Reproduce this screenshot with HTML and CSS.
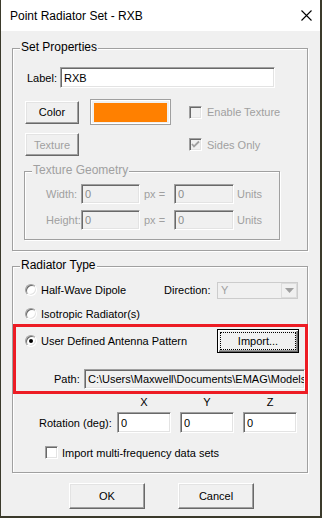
FILE: index.html
```html
<!DOCTYPE html>
<html lang="en">
<head>
    <meta charset="UTF-8">
    <title>Point Radiator Set - RXB</title>
    <link rel="stylesheet" href="styles.css">
</head>
<body>
    <div class="window">
        <div class="titlebar">
            <span class="title">Point Radiator Set - RXB</span>
            <svg class="close" width="11" height="11" viewBox="0 0 11 11">
                <path d="M0.5 0.5 L10.5 10.5 M10.5 0.5 L0.5 10.5" stroke="#000" stroke-width="1.1" fill="none"/>
            </svg>
        </div>
        <div class="client">
            <!-- Set Properties -->
            <div class="group props">
                <span class="group-title">Set Properties</span>
                <div class="label-row">
                    <span class="label-text">Label:</span>
                    <input class="edit label-edit" type="text" value="RXB">
                </div>
                <div class="color-row">
                    <button class="btn">Color</button>
                    <div class="swatch"><div class="swatch-fill"></div></div>
                    <div class="check disabled enable-tex">
                        <span class="box"></span>
                        <span>Enable Texture</span>
                    </div>
                </div>
                <div class="texture-row">
                    <button class="btn disabled">Texture</button>
                    <div class="check disabled sides-only">
                        <span class="box">
                            <svg width="11" height="11" viewBox="0 0 11 11">
                                <path d="M2 5 L4 7.5 L9 2.5" stroke="#a0a0a0" stroke-width="1.8" fill="none"/>
                            </svg>
                        </span>
                        <span>Sides Only</span>
                    </div>
                </div>
                <div class="group geometry">
                    <span class="group-title disabled">Texture Geometry</span>
                    <div class="geo-row">
                        <span class="geo-label">Width:</span>
                        <input class="edit off geo-edit" type="text" value="0" disabled>
                        <span class="px">px =</span>
                        <input class="edit off geo-edit2" type="text" value="0" disabled>
                        <span class="units">Units</span>
                    </div>
                    <div class="geo-row">
                        <span class="geo-label">Height:</span>
                        <input class="edit off geo-edit" type="text" value="0" disabled>
                        <span class="px">px =</span>
                        <input class="edit off geo-edit2" type="text" value="0" disabled>
                        <span class="units">Units</span>
                    </div>
                </div>
            </div>

            <!-- Radiator Type -->
            <div class="group radiator">
                <span class="group-title">Radiator Type</span>
                <div class="hw-row">
                    <div class="radio-opt">
                        <span class="radio"></span>
                        <span>Half-Wave Dipole</span>
                    </div>
                    <span class="dir-label">Direction:</span>
                    <div class="combo">
                        <span class="combo-value">Y</span>
                        <span class="combo-btn">
                            <svg width="9" height="5" viewBox="0 0 9 5">
                                <path d="M0 0 L9 0 L4.5 5 Z" fill="#a0a0a0"/>
                            </svg>
                        </span>
                    </div>
                </div>
                <div class="iso-row">
                    <div class="radio-opt">
                        <span class="radio"></span>
                        <span>Isotropic Radiator(s)</span>
                    </div>
                </div>
                <div class="highlight">
                    <div class="ud-row">
                        <div class="radio-opt wide">
                            <span class="radio checked"></span>
                            <span>User Defined Antenna Pattern</span>
                        </div>
                        <button class="btn default import"><span class="focus">Import...</span></button>
                    </div>
                    <div class="path-row">
                        <span class="path-label">Path:</span>
                        <input class="edit readonly path-edit" type="text" value="C:\Users\Maxwell\Documents\EMAG\Models\" readonly>
                    </div>
                </div>
                <div class="axis-row">
                    <span>X</span>
                    <span>Y</span>
                    <span>Z</span>
                </div>
                <div class="rot-row">
                    <span class="rot-label">Rotation (deg):</span>
                    <input class="edit rot-edit" type="text" value="0">
                    <input class="edit rot-edit" type="text" value="0">
                    <input class="edit rot-edit" type="text" value="0">
                </div>
                <div class="check multi">
                    <span class="box white"></span>
                    <span>Import multi-frequency data sets</span>
                </div>
            </div>

            <div class="buttons">
                <button class="btn dlg">OK</button>
                <button class="btn dlg">Cancel</button>
            </div>
        </div>
    </div>
</body>
</html>
```

FILE: styles.css
```css
* {
    box-sizing: border-box;
}

body {
    margin: 0;
    background: #3b3a2b;
    font-family: "Liberation Sans", Arial, sans-serif;
    font-size: 11px;
    color: #000;
    white-space: nowrap;
}

.window {
    width: 319px;
    height: 516px;
    margin-left: 1px;
    background: #f0f0f0;
}

.titlebar {
    height: 31px;
    background: #fff;
    display: flex;
    align-items: center;
    justify-content: space-between;
    padding: 0 8px 0 9px;
    font-size: 12px;
}

.close {
    display: block;
}

.client {
    padding-top: 17px;
}

/* group boxes */
.group {
    position: relative;
    border: 1px solid #a0a0a0;
    box-shadow: inset 1px 1px 0 #fff, 1px 1px 0 #fff;
}

.group-title {
    position: absolute;
    top: -9px;
    left: 7px;
    padding: 0 1px;
    background: #f0f0f0;
    font-size: 12px;
    line-height: 14px;
}

.group-title.disabled {
    color: #a0a0a0;
}

.props {
    width: 296px;
    height: 203px;
    margin-left: 11px;
    padding-top: 18px;
}

.radiator {
    width: 296px;
    height: 207px;
    margin-left: 11px;
    margin-top: 15px;
    padding-top: 14px;
}

/* controls */
.edit {
    display: block;
    flex-shrink: 0;
    margin: 0;
    padding: 0 0 0 3px;
    font-family: inherit;
    font-size: 11px;
    color: #000;
    background: #fff;
    border: 1px solid;
    border-color: #a0a0a0 #fff #fff #a0a0a0;
    box-shadow: inset 1px 1px 0 #696969, inset -1px -1px 0 #e3e3e3;
    outline: none;
}

.edit.off {
    background: #f0f0f0;
    color: #8c8c8c;
}

.edit.readonly {
    background: #f0f0f0;
}

.btn {
    display: block;
    flex-shrink: 0;
    margin: 0;
    padding: 0;
    font-family: inherit;
    font-size: 11px;
    color: #000;
    background: #f0f0f0;
    border: 1px solid;
    border-color: #fff #696969 #696969 #fff;
    box-shadow: inset -1px -1px 0 #a0a0a0, inset 1px 1px 0 #e3e3e3;
    width: 54px;
    height: 23px;
}

.btn.disabled {
    color: #a0a0a0;
}

.btn.default {
    border: 1px solid #000;
    box-shadow: inset 1px 1px 0 #fff, inset -1px -1px 0 #696969, inset -2px -2px 0 #a0a0a0;
    padding: 3px;
}

.focus {
    display: flex;
    align-items: center;
    justify-content: center;
    height: 100%;
    outline: 1px dotted #000;
}

.check {
    display: flex;
    align-items: center;
    gap: 5px;
}

.check.disabled {
    color: #a0a0a0;
}

.box {
    flex-shrink: 0;
    width: 13px;
    height: 13px;
    border: 1px solid;
    border-color: #a0a0a0 #fff #fff #a0a0a0;
    box-shadow: inset 1px 1px 0 #696969, inset -1px -1px 0 #e3e3e3;
    background: #f0f0f0;
    display: flex;
    align-items: center;
    justify-content: center;
}

.box.white {
    background: #fff;
}

.radio {
    flex-shrink: 0;
    width: 12px;
    height: 12px;
    border-radius: 50%;
    border: 1px solid;
    border-color: #a0a0a0 #fff #fff #a0a0a0;
    box-shadow: inset 1px 1px 0 #696969, inset -1px -1px 0 #e3e3e3;
    background: #fff;
    margin-right: 4px;
    display: flex;
    align-items: center;
    justify-content: center;
}

.radio.checked::after {
    content: "";
    width: 4px;
    height: 4px;
    border-radius: 50%;
    background: #000;
}

/* Set Properties rows */
.label-row {
    display: flex;
    align-items: center;
    height: 21px;
    padding-left: 14px;
}

.label-text {
    width: 33px;
}

.label-edit {
    width: 215px;
    height: 21px;
}

.color-row {
    display: flex;
    align-items: center;
    height: 26px;
    margin-top: 11px;
    padding-left: 12px;
}

.swatch {
    width: 81px;
    height: 26px;
    margin-left: 11px;
    border: 1px solid #a0a0a0;
    box-shadow: inset 1px 1px 0 #fff, inset -1px -1px 0 #fff;
    padding: 3px 3px 2px 3px;
}

.swatch-fill {
    height: 100%;
    background: #ff8000;
}

.enable-tex {
    margin-left: 18px;
}

.texture-row {
    display: flex;
    align-items: center;
    height: 23px;
    margin-top: 8px;
    padding-left: 12px;
}

.sides-only {
    margin-left: 110px;
}

.geometry {
    width: 256px;
    height: 69px;
    margin: 15px 0 0 11px;
    padding-top: 12px;
    color: #a0a0a0;
}

.geo-row {
    display: flex;
    align-items: center;
    height: 20px;
}

.geo-row + .geo-row {
    margin-top: 6px;
}

.geo-label {
    width: 56px;
    padding-left: 21px;
}

.geo-edit {
    width: 59px;
    height: 20px;
}

.px {
    width: 34px;
    padding-left: 4px;
}

.geo-edit2 {
    width: 60px;
    height: 20px;
}

.units {
    margin-left: 3px;
}

/* Radiator Type rows */
.hw-row {
    display: flex;
    align-items: center;
    height: 18px;
    padding-left: 12px;
}

.radio-opt {
    display: flex;
    align-items: center;
    width: 139px;
}

.radio-opt.wide {
    width: 192px;
}

.dir-label {
    width: 53px;
}

.combo {
    width: 81px;
    height: 17px;
    display: flex;
    border: 1px solid #cccccc;
    background: #f0f0f0;
}

.combo-value {
    flex: 1;
    padding-left: 3px;
    color: #a0a0a0;
    line-height: 15px;
}

.combo-btn {
    width: 16px;
    border: 1px solid #dcdcdc;
    display: flex;
    align-items: center;
    justify-content: center;
}

.iso-row {
    display: flex;
    align-items: center;
    height: 18px;
    margin-top: 6px;
    padding-left: 12px;
}

.highlight {
    width: 295px;
    height: 70px;
    margin-top: 1px;
    border: 3px solid #ed1c24;
    padding: 2px 0 0 9px;
}

.ud-row {
    display: flex;
    align-items: center;
    height: 24px;
}

.import {
    width: 82px;
    height: 24px;
}

.path-row {
    display: flex;
    align-items: center;
    height: 20px;
    margin-top: 16px;
    padding-left: 29px;
}

.path-label {
    width: 30px;
}

.path-edit {
    width: 221px;
    height: 20px;
}

.axis-row {
    display: flex;
    gap: 9px;
    height: 13px;
    margin-top: 2px;
    padding-left: 104px;
    line-height: 13px;
}

.axis-row span {
    width: 54px;
    text-align: center;
}

.rot-row {
    display: flex;
    align-items: center;
    height: 21px;
    margin-top: 3px;
    padding-left: 26px;
}

.rot-label {
    width: 78px;
    flex-shrink: 0;
}

.rot-edit {
    width: 54px;
    height: 21px;
}

.rot-edit + .rot-edit {
    margin-left: 9px;
}

.multi {
    height: 13px;
    margin-top: 13px;
    padding-left: 32px;
    gap: 4px;
}

.buttons {
    display: flex;
    gap: 33px;
    margin-top: 10px;
    padding-left: 68px;
}

.dlg {
    width: 76px;
    height: 26px;
}
```
